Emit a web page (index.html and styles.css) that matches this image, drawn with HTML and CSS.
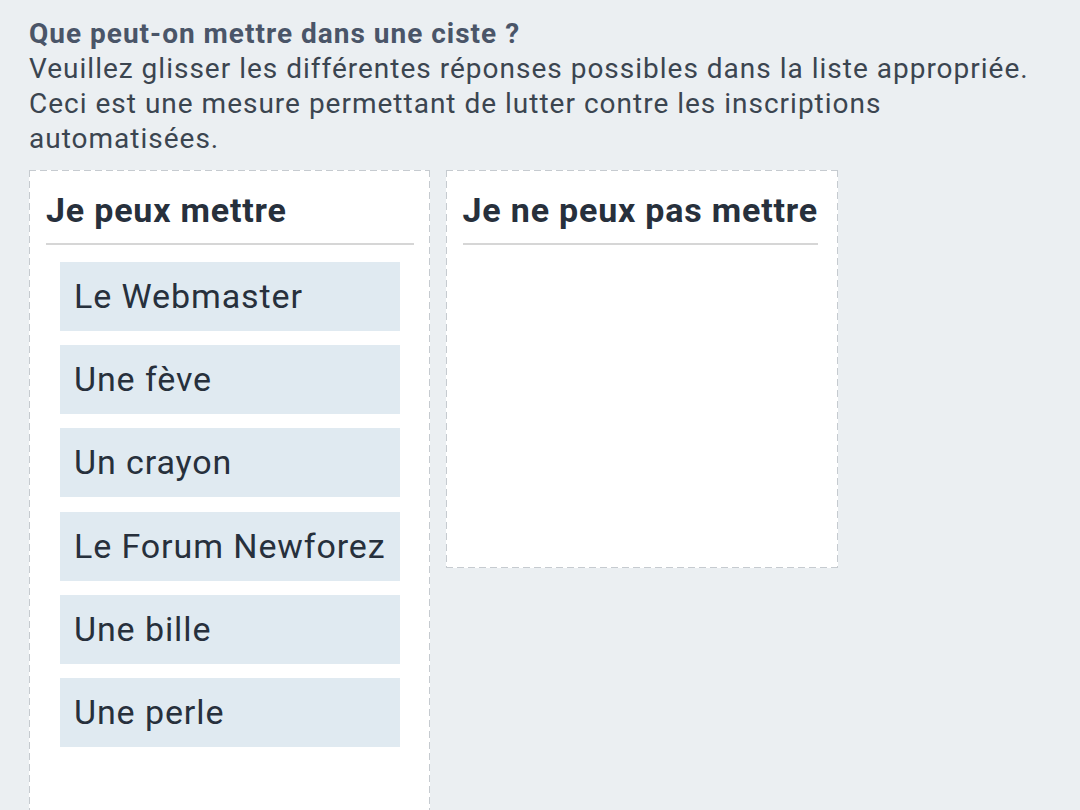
FILE: index.html
```html
<!DOCTYPE html>
<html lang="fr">
<head>
<meta charset="utf-8">
<title>Ciste</title>
<link rel="stylesheet" href="styles.css">
</head>
<body>
<div class="intro">
  <div class="question">Que peut-on mettre dans une ciste ?</div>
  <div class="explain">Veuillez glisser les différentes réponses possibles dans la liste appropriée.</div>
  <div class="explain">Ceci est une mesure permettant de lutter contre les inscriptions automatisées.</div>
</div>
<div class="lists">
  <div class="list list-yes">
    <h3 class="list-title">Je peux mettre</h3>
    <ul class="items">
      <li class="item">Le Webmaster</li>
      <li class="item">Une fève</li>
      <li class="item">Un crayon</li>
      <li class="item">Le Forum Newforez</li>
      <li class="item">Une bille</li>
      <li class="item">Une perle</li>
    </ul>
  </div>
  <div class="list list-no">
    <h3 class="list-title">Je ne peux pas mettre</h3>
    <ul class="items"></ul>
  </div>
</div>
</body>
</html>
```
FILE: styles.css
```css
html, body {
  margin: 0;
  padding: 0;
}
body {
  background: #ebeff2;
  font-family: Roboto, "Noto Sans", sans-serif;
  padding: 16px 29px 0;
  color: #3c4650;
  height: 810px;
  box-sizing: border-box;
  overflow: hidden;
}
.intro {
  font-size: 28px;
  letter-spacing: 1px;
  line-height: 35px;
  width: 1022px;
}
.question {
  font-weight: 700;
  color: #4a5568;
}
.explain {
  color: #3b4550;
}
.lists {
  display: flex;
  align-items: flex-start;
  gap: 16px;
  margin-top: 14px;
}
.list {
  background:
    repeating-linear-gradient(90deg, #c6cbd0 0 7px, transparent 7px 11px) left top / 100% 1px no-repeat,
    repeating-linear-gradient(90deg, #c6cbd0 0 7px, transparent 7px 11px) left bottom / 100% 1px no-repeat,
    repeating-linear-gradient(180deg, #c6cbd0 0 7px, transparent 7px 11px) left top / 1px 100% no-repeat,
    repeating-linear-gradient(180deg, #c6cbd0 0 7px, transparent 7px 11px) right top / 1px 100% no-repeat,
    #fff;
  padding: 17px 20px 0 17px;
  box-sizing: border-box;
}
.list-yes {
  min-height: 660px;
  padding-right: 16px;
}
.list-no {
  min-height: 398px;
}
.list-title {
  margin: 3px 0 0;
  font-size: 34px;
  letter-spacing: 0.8px;
  line-height: 40px;
  font-weight: 700;
  color: #27303c;
  padding-bottom: 13px;
  border-bottom: 2px solid #d6d6d6;
  white-space: nowrap;
}
.items {
  list-style: none;
  margin: 17px 0 0;
  padding: 0 14px;
  display: flex;
  flex-direction: column;
  gap: 14.2px;
}
.item {
  background: #e0eaf1;
  color: #27303c;
  font-size: 34px;
  letter-spacing: 0.9px;
  line-height: 35px;
  padding: 17px 14px;
  white-space: nowrap;
}
```
